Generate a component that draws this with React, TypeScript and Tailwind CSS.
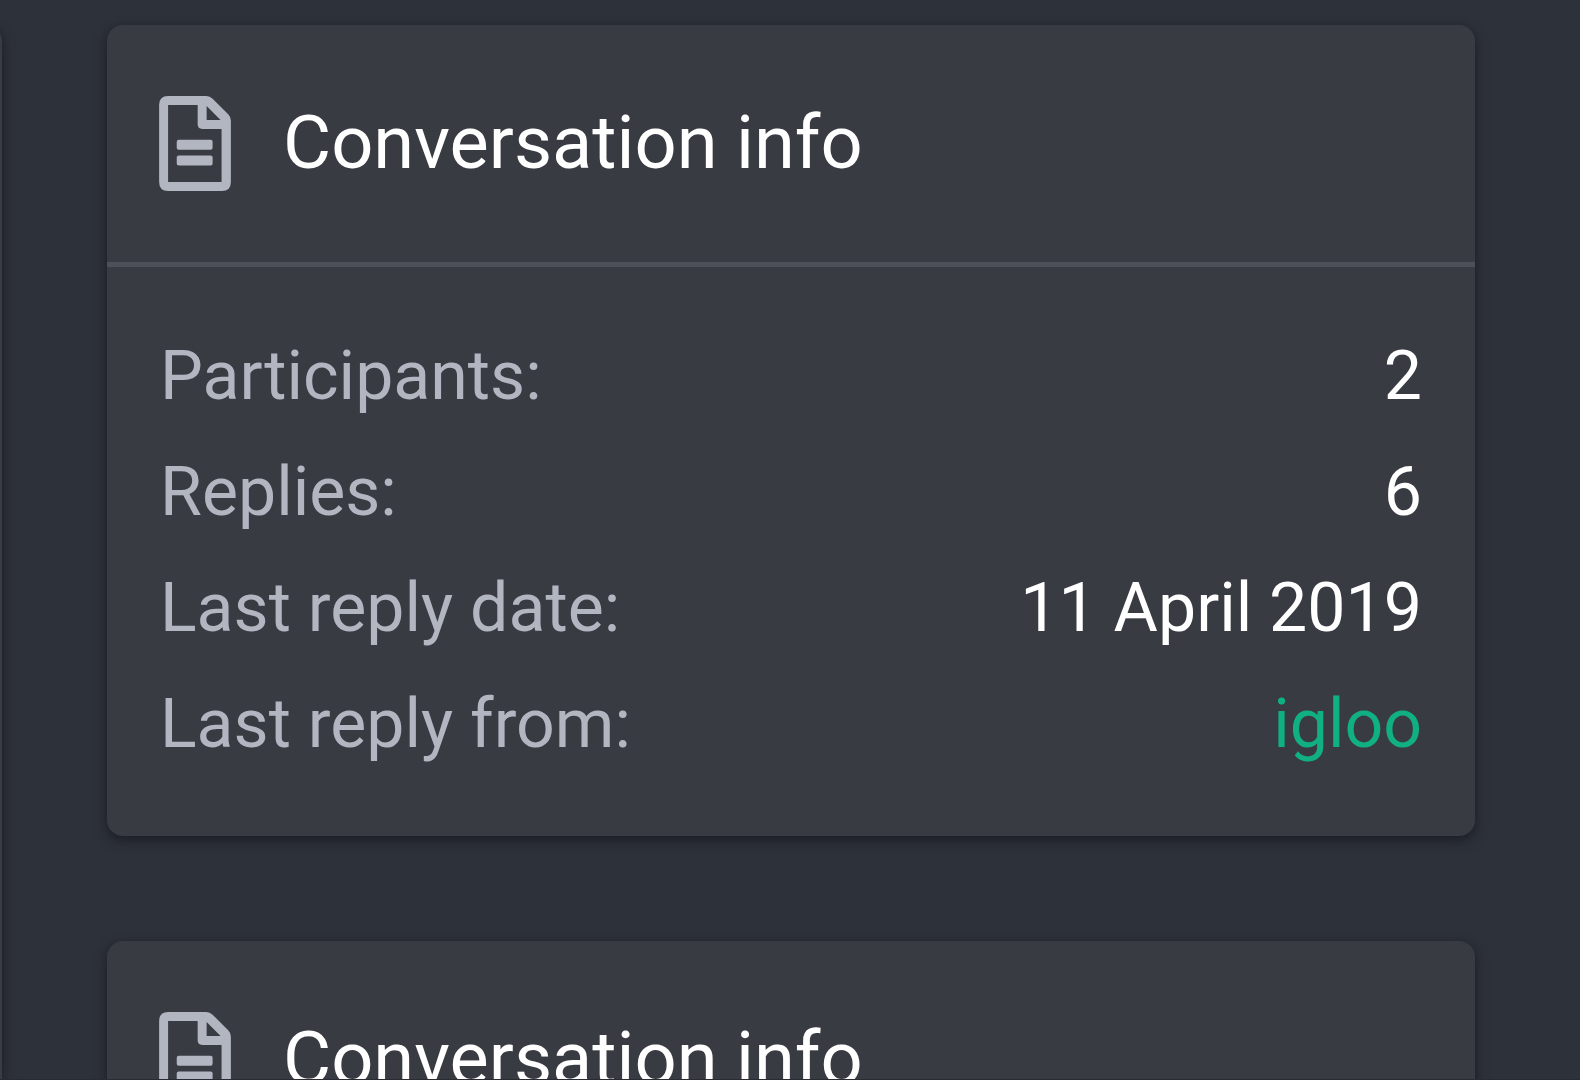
import React from 'react';

type InfoRow = {
  label: string;
  value: string;
  href?: string;
};

const rows: InfoRow[] = [
  { label: 'Participants:', value: '2' },
  { label: 'Replies:', value: '6' },
  { label: 'Last reply date:', value: '11 April 2019' },
  { label: 'Last reply from:', value: 'igloo', href: '#igloo' },
];

function FileIcon() {
  return (
    <svg viewBox="0 0 216 286" className="h-[95px] w-[72px] shrink-0" fill="#b2b6c1" aria-hidden="true">
      <path
        fillRule="evenodd"
        d="M27 0H142Q153 0 161 8L208 55Q216 63 216 74V259Q216 286 189 286H27Q0 286 0 259V27Q0 0 27 0ZM27 27V259H188V99H130Q116 99 116 85V27ZM143 30V72H185Z"
      />
      <rect x="53" y="132" width="108" height="30" rx="6" />
      <rect x="53" y="179" width="108" height="30" rx="6" />
    </svg>
  );
}

function InfoCard() {
  return (
    <section className="rounded-2xl bg-[#393b43] shadow-[0_3px_6px_rgba(20,20,28,0.3),0_5px_14px_rgba(20,20,28,0.4)]">
      <header className="flex items-center gap-[52px] border-b-5 border-[#4e5059] px-[52px] pt-[59px] pb-[60px]">
        <FileIcon />
        <h2 className="text-[74px] leading-[118px] text-white">Conversation info</h2>
      </header>

      <dl className="px-[53px] pt-[51px] pb-[54px] text-[68px] leading-[116px]">
        {rows.map((row) => (
          <div key={row.label} className="flex justify-between">
            <dt className="text-[#b2b6c1]">{row.label}</dt>
            <dd className="text-white">
              {row.href ? (
                <a href={row.href} className="text-[#10b083]">{row.value}</a>
              ) : (
                row.value
              )}
            </dd>
          </div>
        ))}
      </dl>
    </section>
  );
}

export default function App() {
  return (
    <div className="flex h-screen gap-[105px] overflow-hidden border-b border-[#2a2a33] bg-[#2d3139] pt-[25px] pr-[105px] font-[Roboto,sans-serif]">
      {/* Edge of the message column */}
      <div className="-ml-10 w-[42px] shrink-0 rounded-t-2xl bg-[#393b43] shadow-[0_3px_6px_rgba(20,20,28,0.3),0_5px_14px_rgba(20,20,28,0.4)]" />

      {/* Sidebar */}
      <aside className="flex flex-1 flex-col gap-[105px]">
        <InfoCard />
        <InfoCard />
      </aside>
    </div>
  );
}
